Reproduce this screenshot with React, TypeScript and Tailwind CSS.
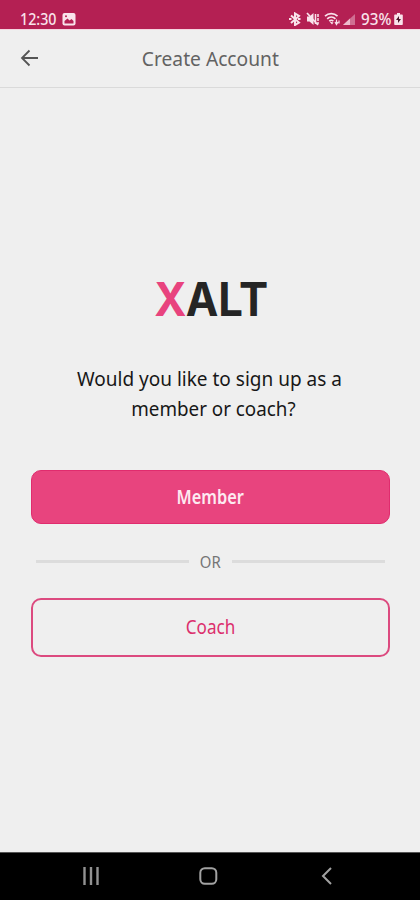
function StatusBar() {
  return (
    <div className="flex h-[29px] shrink-0 items-start bg-[#b42053] pr-[17px] pl-5 pt-[7px] text-[#f9e3eb]">
      <span className="w-[42px] origin-left scale-x-[0.89] text-[16px] leading-6 font-medium">12:30</span>
      <svg className="mt-[6px] h-[13px] w-[14px]" viewBox="0 0 14 13">
        <rect x="0.5" y="0" width="13" height="12.5" rx="2" fill="currentColor" />
        <path d="M2.5 10.5V8l3-2.5 2 2 2-1.5 2 2v2.5z" fill="#b42053" />
        <circle cx="4" cy="3.3" r="1" fill="#b42053" />
      </svg>
      <svg className="mt-[5px] ml-auto h-[14px] w-[12px]" viewBox="0 0 12 14" fill="none" stroke="currentColor" strokeWidth="2">
        <path d="M2 3.5l8 7-4 2.500V1.500l4 2.500-8 7" />
        <path d="M0 7h2.5M9 7h2.500" strokeWidth="2.2" />
      </svg>
      <svg className="mt-[5px] ml-[5px] h-[14px] w-[13px]" viewBox="0 0 13 14" fill="none" stroke="currentColor">
        <path d="M1 4.5h2.5l4-3.5v12l-4-3.5H1z" fill="currentColor" stroke="none" />
        <path d="M9.5 2v10M12 2v3M12 6v3M12 10v2" strokeWidth="1.5" />
        <path d="M1 1l11 12" strokeWidth="1.7" />
      </svg>
      <svg className="mt-[5px] ml-[5px] h-[14px] w-[16px]" viewBox="0 0 16 14" fill="none" stroke="currentColor" strokeWidth="1.7">
        <path d="M1 4.2c3.5-3.5 9-3.5 12.5 0M3.2 6.8c2.4-2.4 5.8-2.4 8.2 0M5.3 9.2c1.3-1.3 2.8-1.3 4 0" />
        <path d="M5.5 9.5L8 12.5l1.5-2z" fill="currentColor" stroke="none" />
        <path d="M11 10l1.5 2.5L14 10M12.5 12V7.5M15 8.5v3" strokeWidth="1.2" />
      </svg>
      <svg className="mt-[5px] ml-[3px] h-[14px] w-[13px]" viewBox="0 0 13 14">
        <path d="M0 13L12 2v11z" fill="#d06f92" />
        <path d="M0 13l7-6.500v6.500z" fill="#eebccd" />
      </svg>
      <span className="ml-[5px] w-[32px] origin-left scale-x-[0.95] text-[16px] leading-6 font-medium">93%</span>
      <svg className="mt-[5px] ml-[1px] h-[14px] w-[9px]" viewBox="0 0 9 14">
        <path d="M3 1h3v1.5h2q.8 0 .8.8v9q0 .8-.8.8H1q-.8 0-.8-.8v-9q0-.8.8-.8h2z" fill="currentColor" />
        <path d="M5 4L2 8h2v3l3-4H5z" fill="#4a1228" />
      </svg>
    </div>
  );
}

function Header() {
  return (
    <header className="relative flex h-[59px] shrink-0 items-center justify-center border-t border-b border-t-[#f5d5e0] border-b-[#dadada] bg-[#efefef]">
      <button className="absolute top-[19px] left-[20px]" aria-label="Back">
        <svg className="h-[18px] w-[19px]" viewBox="0 0 19 18" fill="none" stroke="#555555" strokeWidth="1.8">
          <path d="M18 9H2M9.5 1.5L2 9l7.5 7.5" />
        </svg>
      </button>
      <h1 className="scale-x-[0.96] text-[20px] leading-7 text-[#626262]">Create Account</h1>
    </header>
  );
}

function Divider() {
  return (
    <div className="mx-[5px] flex h-[75px] items-center gap-[10px]">
      <div className="h-[3px] flex-1 bg-[#dcdcdc]" />
      <span className="w-[23px] text-center text-[16px] text-[#757575]">
        <span className="inline-block scale-x-[0.93]">OR</span>
      </span>
      <div className="h-[3px] flex-1 bg-[#dcdcdc]" />
    </div>
  );
}

function NavBar() {
  return (
    <nav className="flex h-[48px] shrink-0 items-center border-t border-[#555] bg-black pb-[2px] pl-[82px]">
      <svg className="h-[18px] w-[18px]" viewBox="0 0 18 18" stroke="#929292" strokeWidth="2.4">
        <path d="M2.5 0v18M9 0v18M15.5 0v18" />
      </svg>
      <svg className="ml-[99px] h-[18px] w-[19px]" viewBox="0 0 19 18" fill="none" stroke="#a2a2a2" strokeWidth="2">
        <rect x="1.3" y="1.2" width="16" height="15.6" rx="4.5" />
      </svg>
      <svg className="ml-[103px] h-[18px] w-[11px]" viewBox="0 0 11 18" fill="none" stroke="#a2a2a2" strokeWidth="2">
        <path d="M10 1L2 9l8 8" />
      </svg>
    </nav>
  );
}

export default function App() {
  return (
    <div className="flex h-[900px] w-[420px] flex-col overflow-hidden bg-[#efefef] font-['Noto_Sans',sans-serif]">
      <StatusBar />
      <Header />
      <main className="flex flex-1 flex-col pr-[30px] pl-[31px] pt-[181px]">
        <div className="flex h-[60px] items-center justify-center font-['Inter',sans-serif] text-[47px] font-bold text-[#252525]">
          <span className="ml-[1px] scale-x-[0.93]">
            <span className="-mr-[1px] text-[#e8437e]">X</span>ALT
          </span>
        </div>
        <p className="mt-[35px] h-[60px] text-center text-[20px] leading-[30px] whitespace-nowrap text-[#171717]">
          <span className="-ml-[3px] inline-block scale-x-[0.95]">Would you like to sign up as a</span>
          <br />
          <span className="ml-[6px] inline-block scale-x-[0.94]">member or coach?</span>
        </p>
        <button className="mt-[46px] flex h-[54px] items-center justify-center rounded-[10px] border border-[#e02c6e] bg-[#e8447e] text-[19px] font-semibold text-[#fdeaf1]">
          <span className="scale-x-[0.86]">Member</span>
        </button>
        <Divider />
        <button className="-mt-[1px] flex h-[59px] items-center justify-center rounded-[10px] border-2 border-[#dc4a7f] text-[19px] text-[#dc2f6d]">
          <span className="scale-x-[0.9]">Coach</span>
        </button>
      </main>
      <NavBar />
    </div>
  );
}
